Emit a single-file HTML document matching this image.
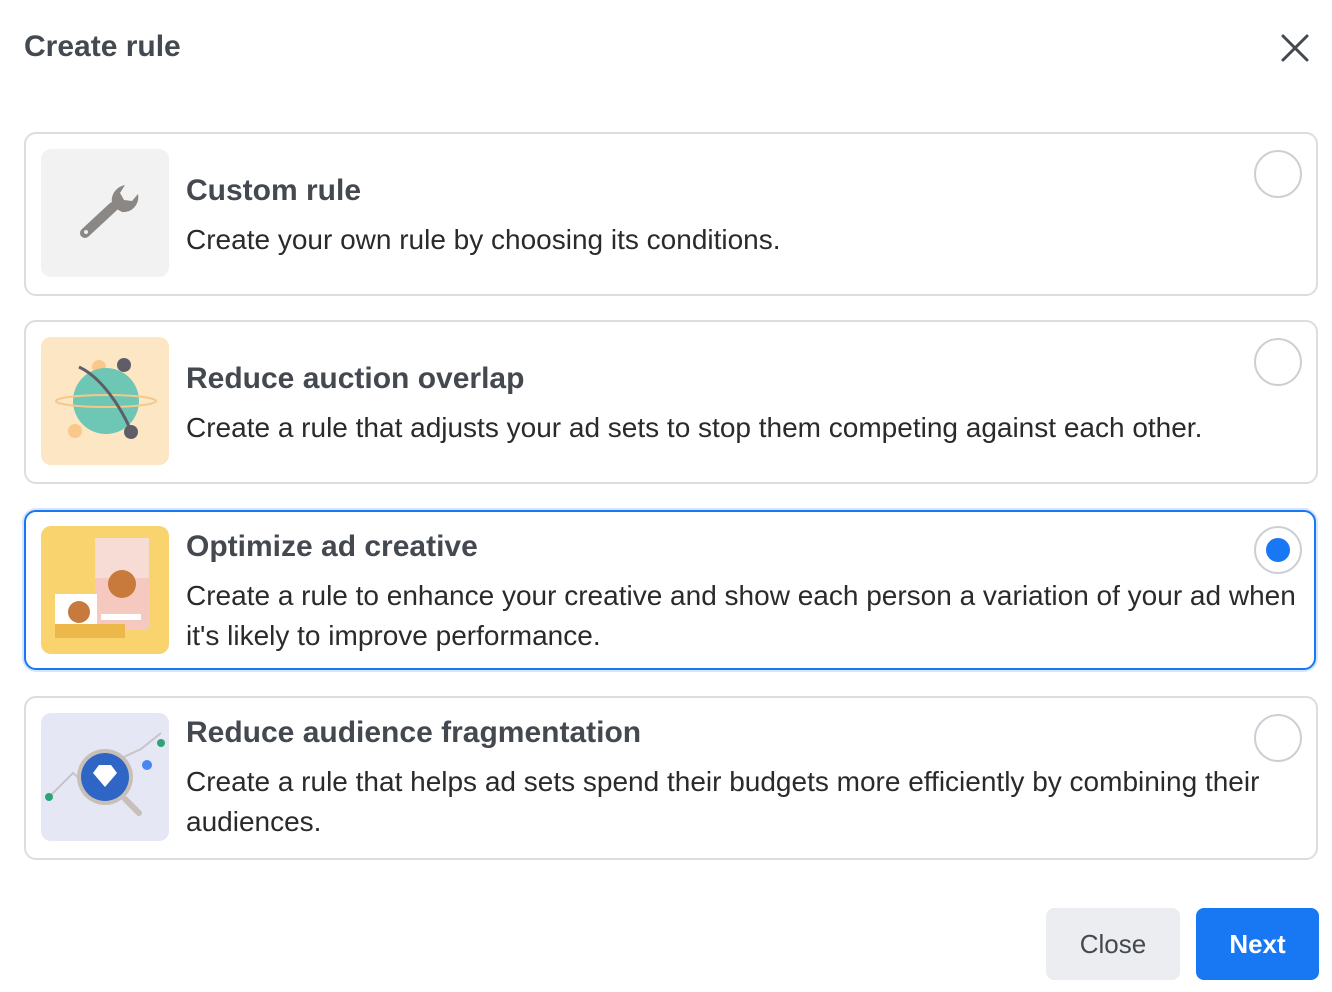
<!DOCTYPE html>
<html><head><meta charset="utf-8"><style>
*{margin:0;padding:0;box-sizing:border-box}
body{width:1332px;height:992px;background:#fff;font-family:"Liberation Sans",Arial,sans-serif;color:#1c1e21;position:relative;overflow:hidden}
h1{position:absolute;left:24px;top:30px;font-size:30px;font-weight:bold;color:#444950}
.x{position:absolute;left:1280px;top:33px;width:30px;height:30px}
.card{position:absolute;left:24px;width:1294px;border:2px solid #dadde1;border-radius:12px;background:#fff}
.card.sel{border-color:#1877f2;box-shadow:0 0 0 2px #d6e6fd;width:1292px}
.thumb{position:absolute;left:15px;top:15px;width:128px;height:128px;border-radius:10px;overflow:hidden}
.t{position:absolute;left:160px;font-size:30px;font-weight:bold;color:#444950}
.d{position:absolute;left:160px;font-size:28px;color:#2a2a2a;line-height:40px;width:1112px}
.r{position:absolute;left:1228px;top:16px;width:48px;height:48px;border-radius:50%;border:2px solid #ccd0d5;background:#fff}
.r.on::after{content:"";position:absolute;left:10px;top:10px;width:24px;height:24px;border-radius:50%;background:#1877f2}
.btn{position:absolute;top:908px;height:72px;border-radius:8px;font-size:26px;display:flex;align-items:center;justify-content:center}
</style></head><body>
<h1>Create rule</h1>
<svg class="x" viewBox="0 0 30 30"><path d="M3 3L27 27M27 3L3 27" stroke="#444950" stroke-width="3" stroke-linecap="round"/></svg>

<div class="card" style="top:132px;height:164px">
 <div class="thumb" style="background:#f2f2f2"><svg width="128" height="128" viewBox="0 0 128 128"><path d="M44 84L72 58" stroke="#8a8784" stroke-width="10" stroke-linecap="round"/><path d="M72 58c-4-10 2-20 12-22l-5 8 4 7 8 1 6-7c2 10-6 19-16 18z" fill="#8a8784"/><circle cx="45" cy="83" r="2" fill="#eee"/></svg></div>
 <div class="t" style="top:40px">Custom rule</div>
 <div class="d" style="top:86px">Create your own rule by choosing its conditions.</div>
 <div class="r"></div>
</div>

<div class="card" style="top:320px;height:164px">
 <div class="thumb" style="background:#fde6c3"><svg width="128" height="128" viewBox="0 0 128 128"><circle cx="58" cy="30" r="7" fill="#f9c88a"/><circle cx="34" cy="94" r="7" fill="#f9c88a"/><circle cx="65" cy="64" r="33" fill="#6ec6b4"/><ellipse cx="65" cy="64" rx="50" ry="6" fill="none" stroke="#f3c98a" stroke-width="2"/><path d="M38 30C60 40 80 70 90 94" stroke="#5f5e68" stroke-width="3" fill="none"/><circle cx="83" cy="28" r="7" fill="#5f5e68"/><circle cx="90" cy="95" r="7" fill="#5f5e68"/></svg></div>
 <div class="t" style="top:40px">Reduce auction overlap</div>
 <div class="d" style="top:86px">Create a rule that adjusts your ad sets to stop them competing against each other.</div>
 <div class="r"></div>
</div>

<div class="card sel" style="top:510px;height:160px">
 <div class="thumb" style="background:#f8d36e;top:14px"><svg width="128" height="128" viewBox="0 0 128 128"><rect x="54" y="12" width="54" height="92" fill="#f6c9c0"/><rect x="54" y="12" width="54" height="40" fill="#f7dcd6"/><circle cx="81" cy="58" r="14" fill="#c77a3c"/><rect x="14" y="68" width="42" height="36" fill="#fff"/><circle cx="38" cy="86" r="11" fill="#c77a3c"/><rect x="14" y="98" width="70" height="14" fill="#edb84a"/><rect x="60" y="88" width="40" height="6" fill="#fff"/></svg></div>
 <div class="t" style="top:18px">Optimize ad creative</div>
 <div class="d" style="top:64px">Create a rule to enhance your creative and show each person a variation of your ad when it's likely to improve performance.</div>
 <div class="r on" style="top:14px"></div>
</div>

<div class="card" style="top:696px;height:164px">
 <div class="thumb" style="background:#e6e7f4"><svg width="128" height="128" viewBox="0 0 128 128"><path d="M8 84L32 60 48 74 70 50 100 36 120 20" stroke="#c8c4c8" stroke-width="2" fill="none"/><circle cx="8" cy="84" r="4" fill="#2aa676"/><circle cx="120" cy="30" r="4" fill="#2aa676"/><circle cx="106" cy="52" r="5" fill="#4a86f2"/><circle cx="64" cy="64" r="28" fill="#c8c0b8"/><circle cx="64" cy="64" r="24" fill="#2f66c6"/><path d="M52 60l6-8h12l6 8-12 14z" fill="#fff"/><path d="M84 86l14 14" stroke="#c8c0b8" stroke-width="6" stroke-linecap="round"/></svg></div>
 <div class="t" style="top:18px">Reduce audience fragmentation</div>
 <div class="d" style="top:64px">Create a rule that helps ad sets spend their budgets more efficiently by combining their audiences.</div>
 <div class="r"></div>
</div>

<div class="btn" style="left:1046px;width:134px;background:#ebedf0;color:#444950">Close</div>
<div class="btn" style="left:1196px;width:123px;background:#1877f2;color:#fff;font-weight:bold">Next</div>
</body></html>
